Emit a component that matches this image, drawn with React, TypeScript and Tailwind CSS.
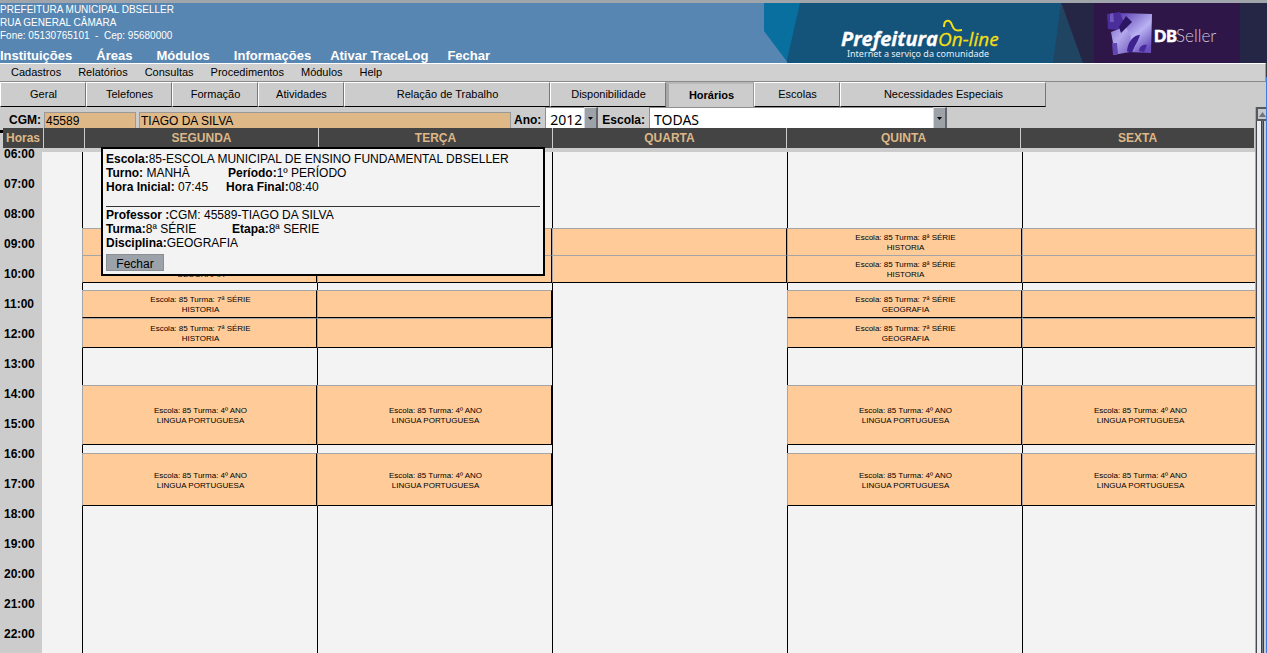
import React from "react";

type Block = { kind: "free" | "busy"; size: string; closed?: boolean; group?: string; subject?: string };
type Slots = [string, string][];

const modules = ["Instituições", "Áreas", "Módulos", "Informações"];
const actions = ["Ativar TraceLog", "Fechar"];
const menu = ["Cadastros", "Relatórios", "Consultas", "Procedimentos", "Módulos", "Help"];

const tabs = [
  { label: "Geral", width: "w-[86px]" },
  { label: "Telefones", width: "w-[86px]" },
  { label: "Formação", width: "w-[86px]" },
  { label: "Atividades", width: "w-[86px]" },
  { label: "Relação de Trabalho", width: "w-[206px]" },
  { label: "Disponibilidade", width: "w-[116px]" },
  { label: "Horários", width: "w-[88px]", active: true },
  { label: "Escolas", width: "w-[86px]" },
  { label: "Necessidades Especiais", width: "w-[206px]" },
];

const hours = Array.from({ length: 17 }, (_, i) => `${String(i + 6).padStart(2, "0")}:00`);
const weekdays = ["SEGUNDA", "TERÇA", "QUARTA", "QUINTA", "SEXTA"];

const free = (size: string): Block => ({ kind: "free", size });
const busy = (size: string, slot: [string, string], closed = true): Block => ({
  kind: "busy",
  size,
  closed,
  group: slot[0],
  subject: slot[1],
});

const fullDay = (s: Slots): Block[] => [
  free("h-[76px]"),
  busy("h-[27px]", s[0], false),
  busy("h-[28px]", s[1]),
  free("h-[7px]"),
  busy("h-[28px]", s[2]),
  busy("h-[30px]", s[3]),
  free("h-[37px]"),
  busy("h-[60px]", s[4]),
  free("h-[8px]"),
  busy("h-[53px]", s[5]),
  free("grow"),
];

const none: [string, string] = ["", ""];
const portuguese: [string, string] = ["4º ANO", "LINGUA PORTUGUESA"];

const week: Block[][] = [
  fullDay([none, ["8ª SÉRIE", "GEOGRAFIA"], ["7ª SÉRIE", "HISTORIA"], ["7ª SÉRIE", "HISTORIA"], portuguese, portuguese]),
  fullDay([none, none, none, none, portuguese, portuguese]),
  [free("h-[76px]"), busy("h-[27px]", none, false), busy("h-[28px]", none), free("grow")],
  fullDay([["8ª SÉRIE", "HISTORIA"], ["8ª SÉRIE", "HISTORIA"], ["7ª SÉRIE", "GEOGRAFIA"], ["7ª SÉRIE", "GEOGRAFIA"], portuguese, portuguese]),
  fullDay([none, none, none, none, portuguese, portuguese]),
];

function Banner() {
  return (
    <svg width="503" height="60" viewBox="764 3 503 60" className="shrink-0" aria-label="Prefeitura On-line DBSeller">
      <defs>
        <linearGradient id="block" x1="0" y1="0" x2="1" y2="1">
          <stop offset="0" stopColor="#7a66cc" />
          <stop offset="0.4" stopColor="#b3a8ec" />
          <stop offset="1" stopColor="#5c40ae" />
        </linearGradient>
        <linearGradient id="face" x1="0" y1="0" x2="0.7" y2="1">
          <stop offset="0" stopColor="#5a3cb0" />
          <stop offset="0.6" stopColor="#b9b2f2" />
          <stop offset="1" stopColor="#6a50bc" />
        </linearGradient>
        <filter id="soft" x="-10%" y="-10%" width="120%" height="120%">
          <feGaussianBlur stdDeviation="0.7" />
        </filter>
      </defs>
      <polygon points="764,3 802,3 788,63 764,31" fill="#086f9f" />
      <polygon points="800,3 1062,3 1054,63 787,63 787,60" fill="#14537a" />
      <polygon points="1061,3 1084,63 1053,63" fill="#204563" />
      <polygon points="1061,3 1267,3 1267,63 1083,63" fill="#252645" />
      <rect x="1094" y="3" width="146" height="60" fill="#2f1648" />

      <text x="841" y="46" fill="#fff" stroke="#fff" strokeWidth="0.3" fontFamily="'Open Sans', sans-serif" fontSize="20" fontWeight="700" fontStyle="italic">
        Prefeitura
      </text>
      <text x="938" y="46" fill="#f3df12" stroke="#f3df12" strokeWidth="0.3" fontFamily="'Open Sans', sans-serif" fontSize="19" fontStyle="italic">
        On-line
      </text>
      <path d="M944 27 C944 19 950 19 952 25 C954 31 957 31 962 30" fill="none" stroke="#f3df12" strokeWidth="2" />
      <text x="847" y="57" fill="#e6eef4" fontFamily="'Noto Sans', sans-serif" fontSize="9">
        Internet a serviço da comunidade
      </text>

      <g filter="url(#soft)">
        <path d="M1107 14 L1120 12 L1124 19 L1119 30 L1108 29 Z" fill="#4c2f9c" />
        <path d="M1110 14 L1113 13 L1114 22 L1110 22 Z" fill="#6f58bc" />
        <path d="M1111 32 L1119 29 L1130 20 L1140 30 L1130 52 L1113 55 L1113 43 Z" fill="url(#block)" />
        <path d="M1120 13 L1152 14 L1151 53 L1129 52 L1131 36 L1126 27 Z" fill="url(#face)" />
        <path d="M1119 27 L1126 16 L1132 22 L1121 33 Z" fill="#2b1262" />
        <path d="M1127 51 C1128 41 1134 35 1140 35 C1138 42 1134 46 1132 53 Z" fill="#3c2090" />
        <path d="M1139 51 C1139 47 1143 44 1147 45 C1146 48 1145 50 1144 52 Z" fill="#4a2c9c" />
        <path d="M1112 43 L1117 43 L1118 54 L1113 55 Z" fill="#6146b2" />
      </g>
      <text x="1154" y="42" fill="#fff" stroke="#fff" strokeWidth="0.6" fontFamily="Lato, sans-serif" fontSize="16" fontWeight="900">
        DB
      </text>
      <text x="1176" y="42" fill="#cfc8dc" fontFamily="Lato, sans-serif" fontSize="17" fontWeight="300">
        Seller
      </text>
    </svg>
  );
}

function Combo({ id, label, value, width }: { id: string; label: string; value: string; width: string }) {
  return (
    <>
      <label htmlFor={id} className="shrink-0 pb-0.5 text-xs leading-3 font-bold">
        {label}
      </label>
      <span className={`relative h-full shrink-0 ${width}`}>
        <select
          id={id}
          defaultValue={value}
          className="block h-full w-full appearance-none border-t border-l border-[#8f8f8f] bg-white pt-0.5 pl-1 font-['Noto_Sans',sans-serif] text-sm leading-5 outline-none"
        >
          <option>{value}</option>
        </select>
        <span className="pointer-events-none absolute inset-y-0 right-0 flex w-3.5 items-center justify-center border-t border-r-2 border-l border-t-[#d5d7da] border-r-[#62666c] border-l-[#d5d7da] bg-[#9ca2a8]">
          <svg width="5" height="3" viewBox="0 0 5 3">
            <path d="M0 0h5L2.5 3z" fill="#000" />
          </svg>
        </span>
      </span>
    </>
  );
}

function Event({ block }: { block: Block }) {
  return (
    <div
      className={`flex shrink-0 flex-col items-center justify-center border-t border-r border-l border-t-[#a5a5a5] border-r-black border-l-[#a5a5a5] bg-[#fc9] pt-0.5 pl-0.5 text-[8px] leading-[10px] ${block.size} ${block.closed ? "border-b border-b-black" : ""}`}
    >
      {block.group && (
        <>
          <span>Escola: 85 Turma: {block.group}</span>
          <span>{block.subject}</span>
        </>
      )}
    </div>
  );
}

function Details() {
  return (
    <section className="absolute -top-px left-[101px] z-10 h-[129px] w-[444px] border-2 border-black bg-[#f3f3f3] px-[3px] pt-[3px] text-[12px] leading-[14px] whitespace-nowrap">
      <p><b>Escola:</b>85-ESCOLA MUNICIPAL DE ENSINO FUNDAMENTAL DBSELLER</p>
      <p className="flex">
        <span className="w-[122px]"><b>Turno:</b> MANHÃ</span>
        <span><b>Período:</b>1º PERÍODO</span>
      </p>
      <p className="flex">
        <span className="w-[120px]"><b>Hora Inicial:</b> 07:45</span>
        <span><b>Hora Final:</b>08:40</span>
      </p>
      <hr className="mt-3 mb-px border-t border-[#333]" />
      <p><b>Professor :</b>CGM: 45589-TIAGO DA SILVA</p>
      <p className="flex">
        <span className="w-[126px]"><b>Turma:</b>8ª SÉRIE</span>
        <span><b>Etapa:</b>8ª SERIE</span>
      </p>
      <p><b>Disciplina:</b>GEOGRAFIA</p>
      <button type="button" className="mt-1 block h-[17px] w-[58px] border border-[#8b8f94] bg-[#9ca2aa] pt-px leading-4">
        Fechar
      </button>
    </section>
  );
}

export default function App() {
  return (
    <div className="flex h-screen flex-col overflow-hidden bg-[#ccc] font-['Liberation_Sans',Arial,sans-serif] text-black">
      <header className="flex h-[63px] shrink-0 justify-between border-t-[3px] border-[#9fa5ab] bg-[#5786b2] text-white">
        <div className="flex flex-col whitespace-nowrap">
          <address className="text-[10px] leading-[13px] whitespace-pre not-italic">
            <p>PREFEITURA MUNICIPAL DBSELLER</p>
            <p>RUA GENERAL CÂMARA</p>
            <p>{"Fone: 05130765101  -  Cep: 95680000"}</p>
          </address>
          <nav className="mt-1.5 flex gap-[19px] text-[13px] leading-[15px] font-bold">
            <div className="flex gap-6">
              {modules.map((m) => <a key={m} href="#">{m}</a>)}
            </div>
            {actions.map((m) => <a key={m} href="#">{m}</a>)}
          </nav>
        </div>
        <Banner />
      </header>

      <div className="flex min-h-0 grow">
        <div className="flex min-w-0 grow flex-col">
          <nav className="flex h-[19px] shrink-0 gap-[17px] border-t border-r border-b border-t-white border-r-[#999] border-b-[#8a8a8a] bg-[#d0d0d0] pl-[11px] text-[11px] leading-[17px]">
            {menu.map((m) => <a key={m} href="#">{m}</a>)}
          </nav>

          <div role="tablist" className="flex h-[25px] shrink-0 text-[11px]">
            {tabs.map((t) => (
              <button
                key={t.label}
                type="button"
                role="tab"
                aria-selected={!!t.active}
                className={`${t.width} shrink-0 pl-px whitespace-nowrap ${t.active ? "border-t-2 border-r border-l-[3px] border-t-[#b8b8b8] border-r-[#999] border-l-[#a8a8a8] font-bold" : "border border-t-white border-r-[#777] border-b-black border-l-white"}`}
              >
                {t.label}
              </button>
            ))}
          </div>

          <div className="flex min-h-0 grow">
            <main className="flex min-w-0 grow flex-col">
              <form className="flex h-[21px] shrink-0 items-end gap-[3px] pl-[9px]">
                <label htmlFor="cgm" className="w-8 pb-0.5 text-xs leading-3 font-bold">CGM:</label>
                <input id="cgm" defaultValue="45589" className="h-4 w-[92px] border-t border-r border-l border-[#999] bg-[#deb887] pl-px text-xs outline-none" />
                <input aria-label="Nome" defaultValue="TIAGO DA SILVA" className="h-4 w-[372px] border-t border-r border-l border-[#999] bg-[#deb887] pl-px text-xs outline-none" />
                <span className="flex h-full items-end gap-1">
                  <Combo id="ano" label="Ano:" value="2012" width="w-[53px]" />
                  <Combo id="escola" label="Escola:" value="TODAS" width="w-[298px]" />
                </span>
              </form>

              <div className="mr-px flex h-5 shrink-0 text-xs leading-5 font-bold text-[#deb887]">
                <span className="mt-0.5 w-[3px] border-t-[3px] border-black" />
                <div className="grid grow grid-cols-[40px_40px_repeat(5,1fr)] gap-px text-center">
                  <span className="bg-[#444]">Horas</span>
                  <span className="bg-[#444]" />
                  {weekdays.map((d) => <span key={d} className="bg-[#444]">{d}</span>)}
                </div>
              </div>

              <div className="relative flex min-h-0 grow">
                <div className="w-[42px] shrink-0 overflow-hidden pl-1 text-xs font-bold">
                  {hours.map((h) => <div key={h} className="h-[30px] leading-3">{h}</div>)}
                </div>
                <div className="mt-1 flex min-w-0 grow overflow-hidden bg-[#f3f3f3] pl-10">
                  <div className="-mr-0.5 grid grow grid-cols-5">
                    {week.map((day, i) => (
                      <div key={weekdays[i]} className="flex min-w-0 flex-col">
                        {day.map((b, j) =>
                          b.kind === "free" ? (
                            <div key={j} className={`shrink-0 border-l border-black ${b.size}`} />
                          ) : (
                            <Event key={j} block={b} />
                          ),
                        )}
                      </div>
                    ))}
                  </div>
                </div>
                <Details />
              </div>
            </main>

            <div className="flex w-[11px] shrink-0 flex-col border-l border-[#a9a9ae]">
              <div className="flex h-3.5 shrink-0 items-center justify-center border-2 border-r-0 border-[#55585f] bg-[#c6c8cc]">
                <svg width="7" height="5" viewBox="0 0 7 5">
                  <path d="M3.5 0L7 5H0z" fill="#6f737b" />
                </svg>
              </div>
              <div className="flex grow border-l border-[#44474d]">
                <div className="w-1 bg-[#ececee]" />
                <div className="w-[3px] border-x border-[#3c3f45] bg-[#777a82]" />
                <div className="grow bg-[#c9cacd]" />
              </div>
            </div>
          </div>
        </div>
        <div className="w-px shrink-0 border-t-[14px] border-[#3a3d42] bg-[#3f7be0]" />
      </div>
    </div>
  );
}
